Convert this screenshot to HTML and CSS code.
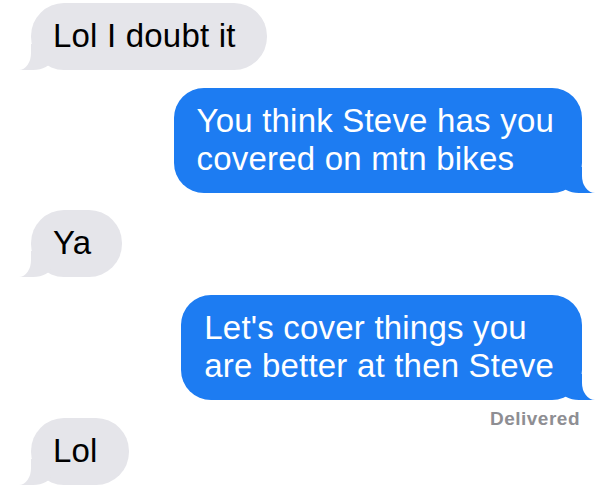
FILE: index.html
```html
<html lang="en">
<head>
  <meta charset="UTF-8">
  <meta name="viewport" content="width=device-width, initial-scale=1.0">
  <title>Messages</title>
  <link rel="stylesheet" href="styles.css">
</head>
<body>
  <div class="thread">
    <div class="msg them">Lol I doubt it</div>
    <div class="msg me">You think Steve has you<br>covered on mtn bikes</div>
    <div class="msg them">Ya</div>
    <div class="msg me">Let's cover things you<br>are better at then Steve</div>
    <div class="status">Delivered</div>
    <div class="msg them">Lol</div>
  </div>
</body>
</html>
```

FILE: styles.css
```css
* {
  padding: 0;
  margin: 0;
  box-sizing: border-box;
}
body {
  background: #fff;
  font-family: "Liberation Sans", Arial, sans-serif;
}
.thread {
  display: flex;
  flex-direction: column;
  padding: 3px 18px 0 31px;
}
.msg {
  position: relative;
  font-size: 33px;
  letter-spacing: 0.2px;
  line-height: 38px;
  padding: 14px 31px 15px 22px;
  border-radius: 33px;
  white-space: nowrap;
}
.msg + .msg {
  margin-top: 17.5px;
}
.them {
  align-self: flex-start;
  background: #e5e5ea;
  color: #000;
}
.me {
  align-self: flex-end;
  background: #1d7cf2;
  color: #fff;
  padding: 14px 28px 15px 23px;
  border-radius: 30px;
}
/* bubble tails */
.msg::before,
.msg::after {
  content: "";
  position: absolute;
  bottom: 0;
  height: 26px;
}
.them::before {
  left: -12px;
  width: 32px;
  background: #e5e5ea;
  border-bottom-right-radius: 18px 10px;
}
.them::after {
  left: -24px;
  width: 24px;
  background: #fff;
  border-bottom-right-radius: 12px 17px;
}
.me::before {
  right: -13px;
  width: 34px;
  background: #1d7cf2;
  border-bottom-left-radius: 18px 10px;
}
.me::after {
  right: -26px;
  width: 26px;
  background: #fff;
  border-bottom-left-radius: 13px 17px;
}
.status {
  align-self: flex-end;
  margin: 9px 2px 0 0;
  font-size: 19px;
  line-height: 20px;
  font-weight: bold;
  letter-spacing: 0.5px;
  color: #8e8e93;
}
.status + .msg {
  margin-top: -11px;
}
```
